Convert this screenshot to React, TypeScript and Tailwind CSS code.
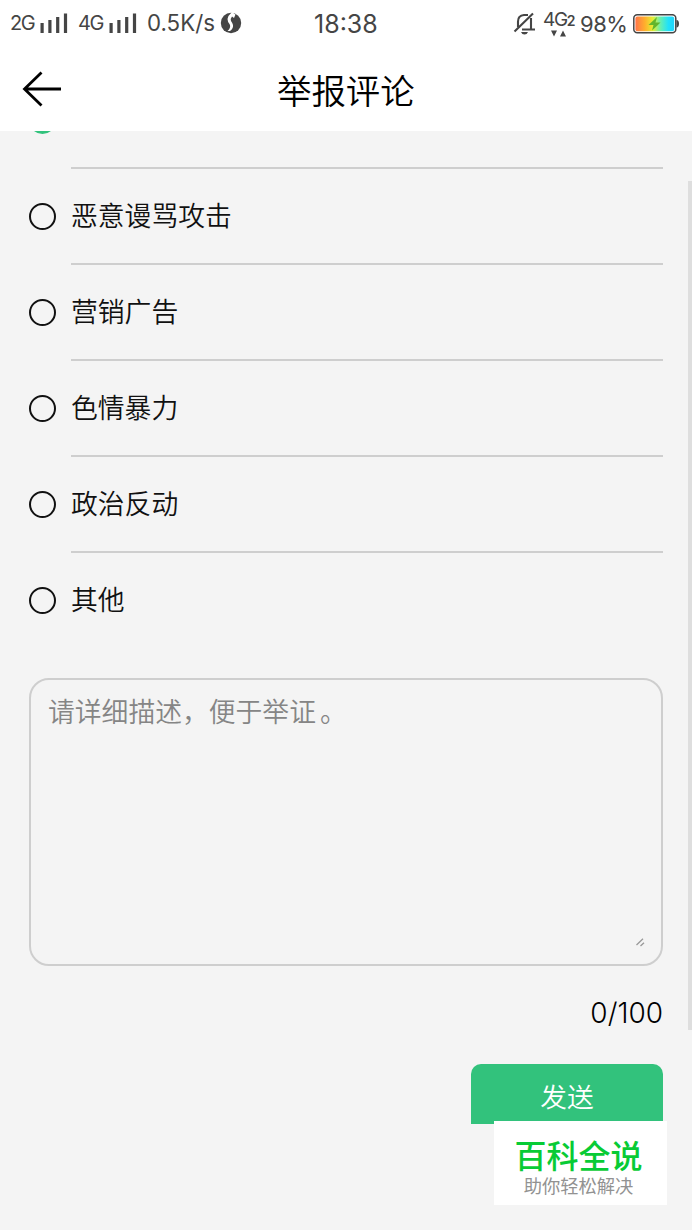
const reasons = ['恶意谩骂攻击', '营销广告', '色情暴力', '政治反动', '其他']

function Signal() {
  return (
    <svg width="28" height="20" viewBox="0 0 28 20" fill="#454545" className="block shrink-0">
      <rect x="0.5" y="10" width="3.2" height="10" />
      <rect x="8.3" y="7" width="3.2" height="13" />
      <rect x="16.1" y="4" width="3.2" height="16" />
      <rect x="23.9" y="0.5" width="3.2" height="19.5" />
    </svg>
  )
}

function StatusBar() {
  return (
    <div className="flex h-12 items-center font-['Inter','Liberation_Sans',sans-serif] text-[#454545]">
      <div className="flex w-[314px] items-center pb-px pl-[10px]">
        <span className="w-[30px] text-[20px] leading-none tracking-[-1.4px]">2G</span>
        <Signal />
        <span className="ml-[10px] w-[31px] text-[20px] leading-none tracking-[-1.4px]">4G</span>
        <Signal />
        <span className="ml-[10px] w-[73px] text-[22.3px] leading-none whitespace-nowrap">0.5K/s</span>
        <svg width="22" height="22" viewBox="0 0 22 22" className="block shrink-0">
          <circle cx="11" cy="11" r="10.2" fill="#454545" />
          <path d="M12 0 Q8 3.5 7.5 7 Q7.5 9.5 9.5 12 Q11 14.5 9 17.5 L7.5 19 L10 19 Q13.5 16.5 13 13 Q12.5 11 11 9 Q10 7 12 4.5 L14 6 L15.5 2.5Z" fill="#fff" />
        </svg>
      </div>
      <span className="w-[199px] text-[25px] leading-none">18:38</span>
      <svg width="23" height="24" viewBox="0 0 23 24" fill="none" stroke="#454545" strokeWidth="2.1" className="block shrink-0">
        <path d="M5 15 V9.5 Q5 3.5 11 3 H15 M18 6 V17.5 M9 17.5 H22 M1.5 19.5 L20 1.5" />
        <path d="M8 20 H15 Q14 22.5 11.5 22.5 Q9 22.5 8 20Z" fill="#454545" stroke="none" />
      </svg>
      <div className="ml-[7px] flex h-[26px] w-[37px] flex-col">
        <div className="flex items-end leading-none">
          <span className="text-[19px] leading-[18px] tracking-[-1.3px]">4G</span>
          <span className="text-[14px] leading-[17px] font-semibold">2</span>
        </div>
        <svg width="16" height="7" viewBox="0 0 16 7" fill="#454545" className="mt-px ml-2 block">
          <path d="M0 0.5 H6 L3 6.5Z M9 6.5 H15 L12 0.5Z" />
        </svg>
      </div>
      <span className="w-[53px] text-[22px] leading-none tracking-[-0.5px]">98%</span>
      <svg width="46" height="20" viewBox="0 0 46 20" className="mb-px block shrink-0">
        <defs>
          <linearGradient id="charge">
            <stop offset="0" stopColor="#ff7448" />
            <stop offset="0.25" stopColor="#ffb02c" />
            <stop offset="0.45" stopColor="#e5ee32" />
            <stop offset="0.65" stopColor="#64efb2" />
            <stop offset="0.85" stopColor="#20e1fa" />
            <stop offset="1" stopColor="#20d4fa" />
          </linearGradient>
        </defs>
        <rect x="0.8" y="0.8" width="42" height="18" rx="3.5" fill="#fff" stroke="#454545" strokeWidth="1.5" />
        <rect x="2.4" y="2.4" width="38.8" height="14.8" rx="2" fill="url(#charge)" />
        <path d="M43.5 6 Q46 6 46 9.8 Q46 13.5 43.5 13.5Z" fill="#454545" />
        <path d="M24 3 L15.5 11 H20.5 L19 16.5 L27.5 8.5 H22.5Z" fill="#62b52c" />
      </svg>
    </div>
  )
}

function Header() {
  return (
    <header className="flex h-[83px] items-center pl-[22px]">
      <svg width="40" height="36" viewBox="0 0 40 36" fill="none" stroke="#000" strokeWidth="2.8" className="mb-0.5 block">
        <path d="M39 18 H2 M19.5 1.5 L2.5 18 L19.5 34.5" />
      </svg>
      <h1 className="mb-px ml-[215px] text-[34.4px] leading-none font-[350] text-black">举报评论</h1>
    </header>
  )
}

export default function App() {
  return (
    <div className="relative h-[1230px] w-[692px] overflow-hidden bg-[#f4f4f4] font-['Noto_Sans_CJK_SC',sans-serif]">
      <div className="h-[131px] bg-white">
        <StatusBar />
        <Header />
      </div>

      <main className="px-[29px]">
        {/* the selected option is scrolled under the header */}
        <div className="flex h-[38px] overflow-hidden">
          <div className="-mt-[25px] h-7 w-[27px] shrink-0 rounded-full bg-[#32c27c]" />
          <div className="ml-[15px] flex-1 border-b-2 border-[#cecece]" />
        </div>
        {reasons.map((reason, i) => (
          <label key={reason} className="flex h-24">
            <span className="mt-[34px] size-[27px] shrink-0 rounded-full border-2 border-[#111]" />
            <span
              className={`ml-[15px] flex-1 pt-8 text-[26.8px] leading-[27px] font-[350] text-[#111] ${
                i < reasons.length - 1 ? 'border-b-2 border-[#cecece]' : ''
              }`}
            >
              {reason}
            </span>
          </label>
        ))}

        <div className="mt-[29px] flex h-72 flex-col justify-between rounded-[20px] border-2 border-[#cecece] pt-[17px] pr-4 pb-[17px] pl-[17px]">
          <p className="text-[26.8px] leading-[27px] font-[350] text-[#858585]">
            请详细描述，便于举证<span className="ml-1">。</span>
          </p>
          <svg width="9" height="9" viewBox="0 0 9 9" stroke="#999" strokeWidth="1.3" className="block self-end">
            <path d="M0.5 7 L7 0.8 M4.5 8 L8 4.7" />
          </svg>
        </div>

        <p className="mt-[33px] text-right font-['Inter','Liberation_Sans',sans-serif] text-[28px] leading-7 font-light text-black">0/100</p>
        <button className="mt-[37px] ml-auto block h-[60px] w-48 rounded-t-[10px] bg-[#32c27c] pt-1 text-[26.7px] leading-none font-[350] text-white">
          发送
        </button>
      </main>

      <div className="absolute top-[181px] right-0 h-[849px] w-1 bg-[#dedede]" />
      <div className="absolute top-[1121px] left-[494px] flex h-[84px] w-[173px] flex-col items-center bg-white pt-[17px] pr-1">
        <p className="text-[32px] leading-8 font-medium text-[#08cb35]">百科全说</p>
        <p className="mt-[6px] text-[18.3px] leading-[19px] text-[#929292]">助你轻松解决</p>
      </div>
    </div>
  )
}
